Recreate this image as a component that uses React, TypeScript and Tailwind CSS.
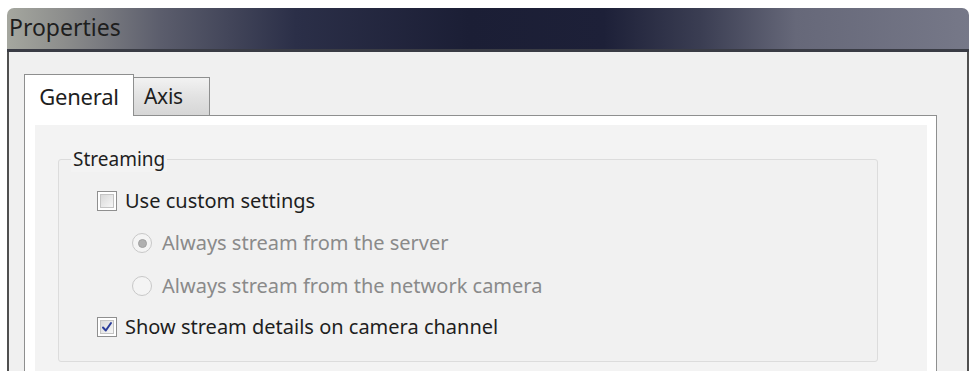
import React from "react";

const font = { fontFamily: '"Noto Sans", "Open Sans", sans-serif' };

function CheckBox({ checked }: { checked?: boolean }) {
  return (
    <div className="w-[20px] h-[20px] border border-[#8f8f8f] bg-white p-[2px] shrink-0">
      <div className="w-full h-full border border-[#c4c4c4] bg-[linear-gradient(135deg,#d9d9d9,#f7f7f7)] flex items-center justify-center">
        {checked && (
          <svg width="12" height="12" viewBox="0 0 12 12">
            <path d="M2 6.5 L4.8 9.5 L10 2" fill="none" stroke="#2b3d9a" strokeWidth="2" strokeLinecap="round" strokeLinejoin="round" />
          </svg>
        )}
      </div>
    </div>
  );
}

function Radio({ checked }: { checked?: boolean }) {
  return (
    <div className="w-[20px] h-[20px] rounded-full border border-[#c8c8c8] bg-[#f4f4f4] flex items-center justify-center shrink-0">
      {checked && <div className="w-[9px] h-[9px] rounded-full bg-[#b0b0b0] border border-[#a0a0a0]" />}
    </div>
  );
}

export default function App() {
  return (
    <div className="w-[973px] h-[371px] bg-white overflow-hidden pt-[8px] pl-[7px] pr-[4px]" style={font}>
      <div className="h-full flex flex-col">
        <div className="h-[44px] shrink-0 rounded-t-[7px] bg-[linear-gradient(to_right,#a5a79f_0%,#8c8d8c_6%,#5b5d6c_16%,#2b2f48_30%,#1b1e35_48%,#1d2038_62%,#3a3d52_72%,#666879_82%,#767888_100%)] flex items-center pl-[2px] pb-[2px] border-b-[3px] border-[#3a3c45]">
          <span className="text-[23px] text-[#1e1e1e] leading-none">Properties</span>
        </div>
        <div className="flex-1 flex flex-col bg-[#f0f0f0] border-l-[2px] border-r-[2px] border-[#505050] pl-[15px] pr-[30px] pt-[21px]">
          <div className="flex items-end h-[42px] shrink-0">
            <div className="h-[42px] w-[110px] bg-white border border-[#8e8f8f] border-b-0 -mb-px relative z-10 flex items-center justify-center pt-[2px]">
              <span className="text-[22px] text-[#1e1e1e] tracking-[-0.2px]">General</span>
            </div>
            <div className="h-[38px] w-[76px] bg-[linear-gradient(to_bottom,#f2f2f2,#e2e2e2_50%,#d6d6d6)] border border-[#8e8f8f] border-l-0 border-b-0 flex items-center pl-[10px] pt-[1px]">
              <span className="text-[21px] text-[#1e1e1e] tracking-[-0.3px]">Axis</span>
            </div>
          </div>
          <div className="flex-1 border border-[#8e8f8f] border-b-0 bg-white pl-[10px] pr-[9px] pt-[9px] flex flex-col">
            <div className="flex-1 bg-[#f3f3f3] pl-[23px] pr-[49px] pt-[34px] flex flex-col">
              <div className="relative border border-[#dcdcdc] rounded-[3px] bg-[#f1f1f1] h-[203px] pl-[38px] pt-[30px]">
                <span className="absolute left-[12px] -top-[14px] bg-[#f3f3f3] px-[2px] text-[19px] text-[#1e1e1e] leading-[26px]">Streaming</span>
                <div className="flex items-center gap-[8px] h-[22px]">
                  <CheckBox />
                  <span className="text-[20px] text-[#1e1e1e]">Use custom settings</span>
                </div>
                <div className="flex items-center gap-[10px] h-[22px] mt-[20px] ml-[35px]">
                  <Radio checked />
                  <span className="text-[20px] text-[#8a8a8a]">Always stream from the server</span>
                </div>
                <div className="flex items-center gap-[10px] h-[22px] mt-[21px] ml-[35px]">
                  <Radio />
                  <span className="text-[20px] text-[#8a8a8a]">Always stream from the network camera</span>
                </div>
                <div className="flex items-center gap-[8px] h-[22px] mt-[19px]">
                  <CheckBox checked />
                  <span className="text-[20px] text-[#1e1e1e]">Show stream details on camera channel</span>
                </div>
              </div>
            </div>
          </div>
        </div>
      </div>
    </div>
  );
}
